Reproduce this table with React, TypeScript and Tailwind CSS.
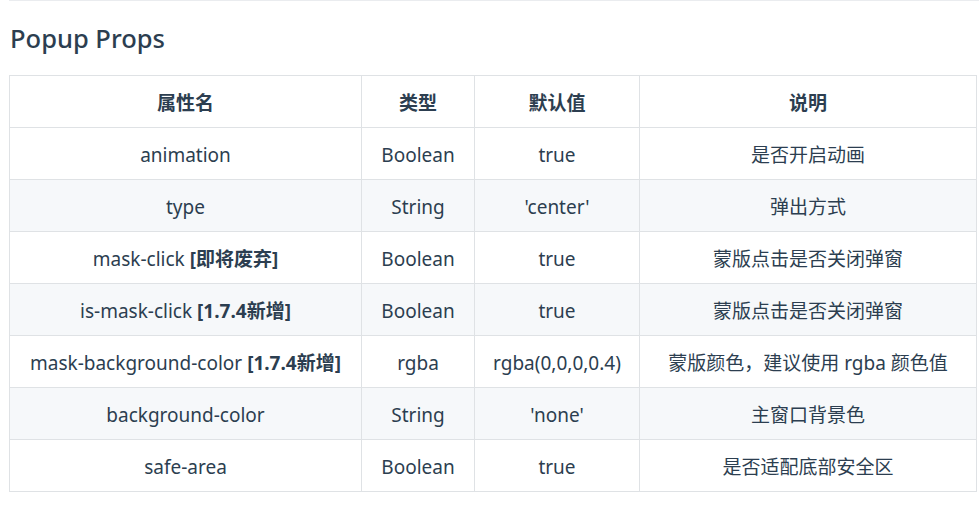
const rows: { name: React.ReactNode; type: string; def: string; desc: string }[] = [
  { name: 'animation', type: 'Boolean', def: 'true', desc: '是否开启动画' },
  { name: 'type', type: 'String', def: "'center'", desc: '弹出方式' },
  {
    name: (
      <>
        mask-click <b className="font-bold">[即将废弃]</b>
      </>
    ),
    type: 'Boolean',
    def: 'true',
    desc: '蒙版点击是否关闭弹窗',
  },
  {
    name: (
      <>
        is-mask-click <b className="font-bold">[1.7.4新增]</b>
      </>
    ),
    type: 'Boolean',
    def: 'true',
    desc: '蒙版点击是否关闭弹窗',
  },
  {
    name: (
      <>
        mask-background-color <b className="font-bold">[1.7.4新增]</b>
      </>
    ),
    type: 'rgba',
    def: 'rgba(0,0,0,0.4)',
    desc: '蒙版颜色，建议使用 rgba 颜色值',
  },
  { name: 'background-color', type: 'String', def: "'none'", desc: '主窗口背景色' },
  { name: 'safe-area', type: 'Boolean', def: 'true', desc: '是否适配底部安全区' },
]

const cell = 'h-[52px] pt-[3px] border border-[#dfe2e5] text-center'

export default function App() {
  return (
    <div
      className="w-[979px] h-[506px] bg-white text-[#2c3e50] overflow-hidden"
      style={{ fontFamily: '"Noto Sans", "Noto Sans CJK SC", sans-serif' }}
    >
      <div className="ml-[9px] border-t border-[#eaecef]" />
      <h3 className="ml-[10px] mt-[21px] text-[25.5px] leading-[32px] font-medium">Popup Props</h3>
      <table className="ml-[9px] mt-[21px] border-collapse text-[19px] leading-[26px]">
        <thead>
          <tr>
            <th className={`w-[352px] font-bold ${cell}`}>属性名</th>
            <th className={`w-[113px] font-bold ${cell}`}>类型</th>
            <th className={`w-[165px] font-bold ${cell}`}>默认值</th>
            <th className={`w-[337px] font-bold ${cell}`}>说明</th>
          </tr>
        </thead>
        <tbody>
          {rows.map((r, i) => (
            <tr key={i} className={i % 2 === 1 ? 'bg-[#f6f8fa]' : 'bg-white'}>
              <td className={cell}>{r.name}</td>
              <td className={cell}>{r.type}</td>
              <td className={cell}>{r.def}</td>
              <td className={cell}>{r.desc}</td>
            </tr>
          ))}
        </tbody>
      </table>
    </div>
  )
}
